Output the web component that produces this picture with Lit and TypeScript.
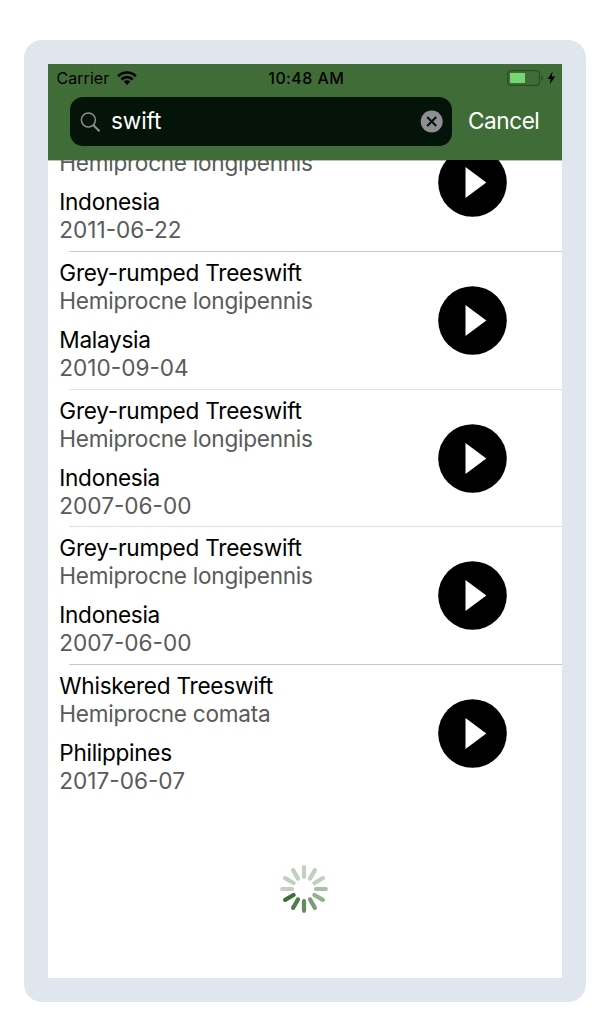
import { LitElement, html, css, svg } from "lit";
import { customElement, property } from "lit/decorators.js";

interface Recording {
  name: string;
  species: string;
  country: string;
  date: string;
}

const recordings: Recording[] = [
  { name: "", species: "Hemiprocne longipennis", country: "Indonesia", date: "2011-06-22" },
  { name: "Grey-rumped Treeswift", species: "Hemiprocne longipennis", country: "Malaysia", date: "2010-09-04" },
  { name: "Grey-rumped Treeswift", species: "Hemiprocne longipennis", country: "Indonesia", date: "2007-06-00" },
  { name: "Grey-rumped Treeswift", species: "Hemiprocne longipennis", country: "Indonesia", date: "2007-06-00" },
  { name: "Whiskered Treeswift", species: "Hemiprocne comata", country: "Philippines", date: "2017-06-07" },
];

@customElement("recording-row")
export class RecordingRow extends LitElement {
  @property({ attribute: false }) recording!: Recording;

  static styles = css`
    :host {
      display: flex;
      align-items: center;
      justify-content: space-between;
      box-sizing: border-box;
      height: 137.7px;
      padding: 0 55px 0 11.3px;
    }
    .text {
      font-size: 22.6px;
      line-height: 28px;
      white-space: nowrap;
      color: #000;
    }
    .name { min-height: 28px; letter-spacing: -0.24px; }
    .species { color: #5a5a5a; letter-spacing: -0.27px; }
    .country { margin-top: 11px; letter-spacing: -0.3px; }
    .date { color: #5a5a5a; }
    .play { display: block; width: 69px; height: 69px; flex: none; }
  `;

  render() {
    const r = this.recording;
    return html`
      <div class="text">
        <div class="name">${r.name}</div>
        <div class="species">${r.species}</div>
        <div class="country">${r.country}</div>
        <div class="date">${r.date}</div>
      </div>
      <svg class="play" viewBox="0 0 69 69">
        <circle cx="34.5" cy="34.5" r="34.3" fill="#000" />
        <path d="M27.5 19v31L48.3 34.5z" fill="#fff" />
      </svg>
    `;
  }
}

@customElement("activity-spinner")
export class ActivitySpinner extends LitElement {
  static styles = css`
    :host { display: block; width: 48px; height: 48px; }
    .spinner { display: block; }
  `;

  render() {
    const colors = [
      "#c1d0bf", "#c1d0bf", "#c1d0bf", "#a9bfa6", "#93af8f", "#7a9d76",
      "#628c5d", "#4f7e49", "#3f6f38", "#c1d0bf", "#c1d0bf", "#c1d0bf",
    ];
    return html`
      <svg class="spinner" width="48" height="48" viewBox="-24 -24 48 48">
        ${colors.map(
          (c, i) => svg`<line x1="0" y1="-12" x2="0" y2="-21.8" stroke=${c}
            stroke-width="4.2" stroke-linecap="round" transform="rotate(${i * 30})" />`
        )}
      </svg>
    `;
  }
}

@customElement("app-root")
export class AppRoot extends LitElement {
  static styles = css`
    :host {
      display: block;
      box-sizing: border-box;
      height: 1032px;
      padding: 40px 20px 30px 24px;
      background: #fff;
      font-family: Inter, "Liberation Sans", sans-serif;
    }
    .frame {
      box-sizing: border-box;
      width: 562px;
      height: 962px;
      padding: 24px;
      border-radius: 18px;
      background: #dfe6ee;
    }
    .screen {
      display: flex;
      flex-direction: column;
      width: 514px;
      height: 914px;
      overflow: hidden;
      background: #fff;
    }
    .header {
      flex: none;
      height: 96px;
      background: #406d37;
    }
    .status {
      display: grid;
      grid-template-columns: 1fr auto 1fr;
      align-items: center;
      height: 28px;
      padding: 0 6px 0 8.5px;
      margin-bottom: 5px;
      font-size: 16px;
      line-height: 28px;
      color: #000;
    }
    .carrier { display: flex; align-items: center; gap: 8px; letter-spacing: 0.05px; }
    .time { font-weight: 500; letter-spacing: 0.4px; }
    .power { display: flex; align-items: center; justify-content: flex-end; }
    .icon { display: block; flex: none; }
    .search { display: flex; align-items: center; padding-left: 22px; }
    .field {
      display: flex;
      align-items: center;
      box-sizing: border-box;
      width: 382px;
      height: 49px;
      padding: 0 9px 0 10px;
      border-radius: 13px;
      background: #041408;
      color: #fff;
    }
    .query { flex: 1; padding: 0 0 2px 11px; font-size: 22.6px; line-height: 28px; letter-spacing: -0.1px; }
    .cancel { padding: 0 0 2px 16px; font-size: 22.6px; line-height: 28px; letter-spacing: -0.45px; color: #fff; }
    .list { flex: 1; min-height: 0; overflow: hidden; box-shadow: inset 0 1px #b8bfb6; }
    .rows { margin-top: -46.2px; }
    .divider { height: 1px; margin: -0.5px 0 -0.5px 20.5px; background: #c8c7cc; }
    .divider.soft { background: #e0e0e2; }
    .loading { display: flex; padding: 62.6px 0 0 231.5px; }
  `;

  render() {
    return html`
      <div class="frame">
        <div class="screen">
          <div class="header">
            <div class="status">
              <div class="carrier">
                <span>Carrier</span>
                <svg class="icon" width="20" height="14" viewBox="0 0 20 14">
                  <g fill="none" stroke="#000" stroke-width="2.7">
                    <path d="M1.2 5.2a12.3 12.3 0 0 1 17.6 0" />
                    <path d="M4.4 8.5a7.8 7.8 0 0 1 11.2 0" />
                  </g>
                  <path d="M6.7 10.6a4.6 4.6 0 0 1 6.6 0L10 14z" />
                </svg>
              </div>
              <div class="time">10:48 AM</div>
              <div class="power">
                <svg class="icon" width="49" height="16" viewBox="0 0 49 16">
                  <rect x=".7" y=".7" width="31.8" height="14.6" rx="3.2" fill="none" stroke="#284c23" stroke-width="1.3" />
                  <rect x="3" y="3" width="15" height="10" fill="#76d672" />
                  <path d="M34.5 5.3c2 .8 2 4.6 0 5.4z" fill="#284c23" />
                  <path d="M45.6 1.5L40.6 8.9h3.2l-1.2 5.5 5.6-7.9h-3.4z" fill="#000" />
                </svg>
              </div>
            </div>
            <div class="search">
              <div class="field">
                <svg class="icon" width="20" height="20" viewBox="0 0 20 20" fill="none" stroke="#8e8e93">
                  <circle cx="8.4" cy="8" r="7" stroke-width="1.5" />
                  <path d="M13.2 13l6.3 6.2" stroke-width="2" />
                </svg>
                <div class="query">swift</div>
                <svg class="icon" width="23" height="23" viewBox="0 0 23 23">
                  <circle cx="11.7" cy="11.5" r="11" fill="#8e8e93" />
                  <path d="M7.2 7l9 9M16.2 7l-9 9" stroke="#041408" stroke-width="2.1" />
                </svg>
              </div>
              <div class="cancel">Cancel</div>
            </div>
          </div>
          <div class="list">
            <div class="rows">
              ${recordings.map(
                (r, i) => html`
                  ${i ? html`<div class="divider ${i === 2 || i === 3 ? "soft" : ""}"></div>` : ""}
                  <recording-row .recording=${r}></recording-row>
                `
              )}
            </div>
            <div class="loading"><activity-spinner></activity-spinner></div>
          </div>
        </div>
      </div>
    `;
  }
}
